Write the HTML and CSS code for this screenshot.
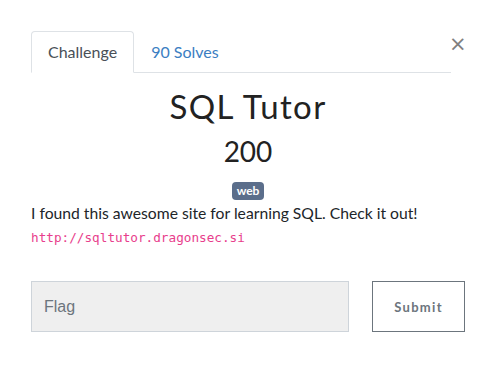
FILE: index.html
```html
<!DOCTYPE html>
<html lang="en-US">
<head>
    <meta charset="UTF-8">
    <title>SQL Tutor</title>
    <link rel="stylesheet" href="styles.css">
</head>
<body>
    <div class="modal-body">
        <div class="modal-head">
            <nav class="tabs">
                <a class="tab active">Challenge</a>
                <a class="tab">90 Solves</a>
            </nav>
            <button class="close" title="Close">&times;</button>
        </div>
        <div class="challenge">
            <h2 class="challenge-name">SQL Tutor</h2>
            <h3 class="challenge-value">200</h3>
            <span class="badge">web</span>
        </div>
        <p class="description">I found this awesome site for learning SQL. Check it out!</p>
        <code class="link">http://sqltutor.dragonsec.si</code>
        <form class="flag-row" onsubmit="return false">
            <input class="flag-input" type="text" placeholder="Flag">
            <button class="submit" type="submit">Submit</button>
        </form>
    </div>
</body>
</html>
```
FILE: styles.css
```css
        body {
            margin: 0;
            background: #fff;
            font-family: Lato, 'Open Sans', sans-serif;
            color: #212529;
        }

        .modal-body {
            width: 434px;
            padding: 31px 0 0 31px;
        }

        .modal-head {
            display: flex;
            align-items: flex-start;
        }

        .tabs {
            display: flex;
            flex-shrink: 0;
            width: 420px;
            border-bottom: 1px solid #dee2e6;
        }

        .tab {
            padding: 8px 16px;
            line-height: 24px;
            font-size: 16px;
            color: #3b7ec2;
            border: 1px solid transparent;
            border-radius: 4px 4px 0 0;
            margin-bottom: -1px;
            cursor: pointer;
        }

        .tab.active {
            color: #495057;
            border-color: #dee2e6 #dee2e6 #fff;
            background: #fff;
        }

        .close {
            margin: 3px 0 0 -2px;
            padding: 0;
            border: 0;
            background: none;
            font-family: 'DejaVu Sans', sans-serif;
            font-size: 21px;
            line-height: 20px;
            color: #808080;
            cursor: pointer;
        }

        .challenge {
            display: flex;
            flex-direction: column;
            align-items: center;
        }

        .challenge-name {
            margin: 13px 0 0;
            font-size: 33px;
            font-weight: 400;
            line-height: 40px;
            letter-spacing: 1.4px;
            color: #222;
        }

        .challenge-value {
            margin: 8px 0 0;
            font-size: 28px;
            font-weight: 400;
            line-height: 34px;
            color: #222;
        }

        .badge {
            margin-top: 14px;
            padding: 2px 5px 3px;
            border-radius: 4px;
            background: #5b6e8b;
            color: #fff;
            font-size: 12px;
            font-weight: 700;
            line-height: 13px;
        }

        .description {
            margin: 1px 0 0;
            font-size: 15.7px;
            line-height: 24px;
        }

        .link {
            display: block;
            margin-top: 4px;
            font-family: 'DejaVu Sans Mono', 'Liberation Mono', monospace;
            font-size: 12.7px;
            line-height: 18px;
            color: #e83e8c;
        }

        .flag-row {
            display: flex;
            justify-content: space-between;
            margin-top: 34px;
        }

        .flag-input {
            box-sizing: border-box;
            width: 318px;
            height: 51px;
            padding: 0 12px;
            border: 1px solid #ced4da;
            background: #efefef;
            font-family: 'Liberation Sans', Arial, sans-serif;
            font-size: 16px;
            color: #495057;
        }

        .flag-input::placeholder {
            color: #6c757d;
        }

        .submit {
            box-sizing: border-box;
            width: 93px;
            height: 51px;
            border: 1px solid #6c757d;
            background: #fff;
            color: #6c757d;
            font-family: Lato, sans-serif;
            font-size: 13px;
            font-weight: 700;
            letter-spacing: 1.3px;
            cursor: pointer;
        }
```
